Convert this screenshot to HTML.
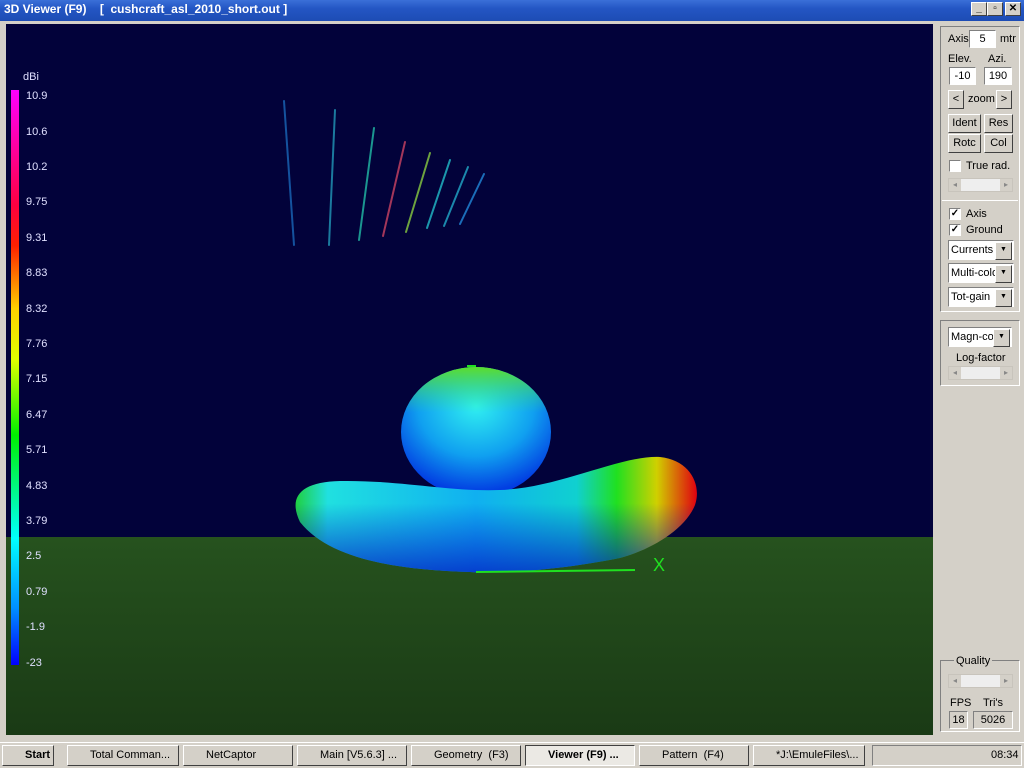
<!DOCTYPE html>
<html><head><style>
*{margin:0;padding:0;box-sizing:border-box}
body{width:1024px;height:768px;overflow:hidden;background:#d4d0c8;font-family:"Liberation Sans",sans-serif;font-size:11px;position:relative}
.a{position:absolute}
.title{left:0;top:0;width:1024px;height:21px;background:linear-gradient(#3a6fd8,#2456c4 40%,#1d4cb4);color:#fff;font-weight:bold;font-size:12px;line-height:19px;padding-left:4px}
.tb{top:2px;width:16px;height:14px;background:#d4d0c8;border:1px solid;border-color:#fff #404040 #404040 #fff;font-size:10px;font-weight:bold;text-align:center;line-height:12px;color:#000}
.vp{left:6px;top:24px;width:927px;height:711px;background:#02023a;overflow:hidden}
.lab{color:#e0e0ff;font-size:11px;left:20px}
.btn{background:#d4d0c8;border:1px solid;border-color:#fff #404040 #404040 #fff;text-align:center;font-size:11px;line-height:17px;height:19px}
.inp{background:#fff;border:1px solid;border-color:#808080 #fff #fff #808080;text-align:center;font-size:11px;line-height:16px;height:18px}
.dd{background:#fff;border:1px solid;border-color:#808080 #fff #fff #808080;height:20px;font-size:11px;line-height:18px;padding-left:2px;width:66px}
.dd:after{content:"▼";position:absolute;right:1px;top:1px;width:15px;height:16px;background:#d4d0c8;border:1px solid;border-color:#fff #404040 #404040 #fff;font-size:7px;text-align:center;line-height:14px}
.cb{width:12px;height:12px;background:#fff;border:1px solid;border-color:#808080 #fff #fff #808080;font-size:10px;line-height:10px;text-align:center;font-weight:bold}
.sb{height:14px;background:#eee;border:1px solid #c8c4bc}
.sb:before{content:"◂";position:absolute;left:0;top:0;width:12px;height:12px;background:#d4d0c8;font-size:8px;line-height:12px;text-align:center;color:#888}
.sb:after{content:"▸";position:absolute;right:0;top:0;width:12px;height:12px;background:#d4d0c8;font-size:8px;line-height:12px;text-align:center;color:#888}
.task{left:0;top:742px;width:1024px;height:26px;background:#d4d0c8;border-top:1px solid #fff}
.tk{top:3px;height:21px;border:1px solid;border-color:#fff #404040 #404040 #fff;font-size:11px;line-height:19px;padding-left:22px;white-space:nowrap;overflow:hidden}
</style></head><body>
<div class="a title">3D Viewer (F9) &nbsp;&nbsp; [ &nbsp;cushcraft_asl_2010_short.out ]</div>
<div class="a tb" style="left:971px">_</div><div class="a tb" style="left:987px">▫</div><div class="a tb" style="left:1005px">✕</div>
<div class="a vp">
<svg width="927" height="711" viewBox="6 24 927 711">
<defs>
<linearGradient id="leg" x1="0" y1="0" x2="0" y2="1">
<stop offset="0" stop-color="#ff00ff"/><stop offset=".2" stop-color="#ff0040"/><stop offset=".27" stop-color="#ff2000"/><stop offset=".38" stop-color="#ffd000"/><stop offset=".47" stop-color="#e0ff00"/><stop offset=".6" stop-color="#00f000"/><stop offset=".78" stop-color="#00ffff"/><stop offset=".9" stop-color="#0090ff"/><stop offset="1" stop-color="#0000ff"/></linearGradient>
<linearGradient id="gr" x1="0" y1="0" x2="0" y2="1"><stop offset="0" stop-color="#26521e"/><stop offset="1" stop-color="#1a3a15"/></linearGradient>
<radialGradient id="ball" cx=".5" cy=".3" r=".7"><stop offset="0" stop-color="#30f0f0"/><stop offset=".55" stop-color="#10a0f0"/><stop offset="1" stop-color="#0030e0"/></radialGradient>
<linearGradient id="ballt" x1="0" y1="0" x2="0" y2="1"><stop offset="0" stop-color="#60e020" stop-opacity=".95"/><stop offset=".35" stop-color="#30e080" stop-opacity="0"/></linearGradient>
<linearGradient id="tor" x1="0" y1="0" x2="1" y2="0"><stop offset="0" stop-color="#20d040"/><stop offset=".08" stop-color="#20e0e0"/><stop offset=".45" stop-color="#10b0f0"/><stop offset=".7" stop-color="#10d0d0"/><stop offset=".8" stop-color="#20e020"/><stop offset=".9" stop-color="#d0d000"/><stop offset="1" stop-color="#e00010"/></linearGradient>
<linearGradient id="torv" x1="0" y1="0" x2="0" y2="1"><stop offset=".4" stop-color="#0000d0" stop-opacity="0"/><stop offset="1" stop-color="#0010c0" stop-opacity=".7"/></linearGradient>
</defs>
<rect x="6" y="537" width="927" height="198" fill="url(#gr)"/>
<rect x="11" y="90" width="8" height="575" fill="url(#leg)"/>
<g stroke-width="2" stroke-linecap="round" opacity=".85">
<line x1="284" y1="101" x2="294" y2="245" stroke="#1860b0"/>
<line x1="335" y1="110" x2="329" y2="245" stroke="#2090b0"/>
<line x1="374" y1="128" x2="359" y2="240" stroke="#20b0a0"/>
<line x1="405" y1="142" x2="383" y2="236" stroke="#c04060"/>
<line x1="430" y1="153" x2="406" y2="232" stroke="#80c040"/>
<line x1="450" y1="160" x2="427" y2="228" stroke="#20b0c0"/>
<line x1="468" y1="167" x2="444" y2="226" stroke="#20a0c0"/>
<line x1="484" y1="174" x2="460" y2="224" stroke="#2080d0"/>
</g>
<ellipse cx="476" cy="432" rx="75" ry="65" fill="url(#ball)"/>
<ellipse cx="476" cy="432" rx="75" ry="65" fill="url(#ballt)"/>
<path id="t" d="M300 522 C288 497 300 482 340 481 C400 480 450 492 500 490 C560 488 620 455 660 457 C690 460 702 485 695 505 C685 530 650 550 620 558 C560 570 500 574 470 572 C400 570 330 560 300 522Z" fill="url(#tor)"/>
<path d="M300 522 C288 497 300 482 340 481 C400 480 450 492 500 490 C560 488 620 455 660 457 C690 460 702 485 695 505 C685 530 650 550 620 558 C560 570 500 574 470 572 C400 570 330 560 300 522Z" fill="url(#torv)"/>
<line x1="476" y1="572" x2="635" y2="570" stroke="#20e020" stroke-width="2"/>
<text x="653" y="571" fill="#20e020" font-size="18" font-family="Liberation Sans">X</text>
<line x1="467" y1="366" x2="476" y2="366" stroke="#20e020" stroke-width="2"/>
</svg>
<div class="a lab" style="left:17px;top:47px">dBi</div>
<div class="a lab" style="top:66px">10.9</div><div class="a lab" style="top:102px">10.6</div><div class="a lab" style="top:137px">10.2</div><div class="a lab" style="top:172px">9.75</div><div class="a lab" style="top:208px">9.31</div><div class="a lab" style="top:243px">8.83</div><div class="a lab" style="top:279px">8.32</div><div class="a lab" style="top:314px">7.76</div><div class="a lab" style="top:349px">7.15</div><div class="a lab" style="top:385px">6.47</div><div class="a lab" style="top:420px">5.71</div><div class="a lab" style="top:456px">4.83</div><div class="a lab" style="top:491px">3.79</div><div class="a lab" style="top:526px">2.5</div><div class="a lab" style="top:562px">0.79</div><div class="a lab" style="top:597px">-1.9</div><div class="a lab" style="top:633px">-23</div>
</div>
<!-- right panel -->
<div class="a" style="left:940px;top:26px;width:80px;height:286px;border:1px solid;border-color:#808080 #fff #fff #808080"></div>
<div class="a" style="left:948px;top:33px">Axis</div><div class="a inp" style="left:969px;top:30px;width:27px">5</div><div class="a" style="left:1000px;top:33px">mtr</div>
<div class="a" style="left:948px;top:53px">Elev.</div><div class="a" style="left:988px;top:53px">Azi.</div>
<div class="a inp" style="left:949px;top:67px;width:27px">-10</div><div class="a inp" style="left:984px;top:67px;width:28px">190</div>
<div class="a btn" style="left:948px;top:90px;width:16px">&lt;</div><div class="a" style="left:968px;top:93px">zoom</div><div class="a btn" style="left:996px;top:90px;width:16px">&gt;</div>
<div class="a btn" style="left:948px;top:114px;width:33px">Ident</div><div class="a btn" style="left:984px;top:114px;width:29px">Res</div>
<div class="a btn" style="left:948px;top:134px;width:33px">Rotc</div><div class="a btn" style="left:984px;top:134px;width:29px">Col</div>
<div class="a cb" style="left:949px;top:160px"></div><div class="a" style="left:966px;top:160px">True rad.</div>
<div class="a sb" style="left:948px;top:178px;width:65px"></div>
<div class="a" style="left:942px;top:200px;width:76px;border-top:1px solid #fff"></div>
<div class="a cb" style="left:949px;top:208px">✓</div><div class="a" style="left:966px;top:208px">Axis</div>
<div class="a cb" style="left:949px;top:224px">✓</div><div class="a" style="left:966px;top:224px">Ground</div>
<div class="a dd" style="left:948px;top:240px">Currents</div>
<div class="a dd" style="left:948px;top:263px">Multi-colo</div>
<div class="a dd" style="left:948px;top:287px">Tot-gain</div>
<div class="a" style="left:940px;top:320px;width:80px;height:66px;border:1px solid;border-color:#808080 #fff #fff #808080"></div>
<div class="a dd" style="left:948px;top:327px;width:64px">Magn-co</div>
<div class="a" style="left:956px;top:352px">Log-factor</div>
<div class="a sb" style="left:948px;top:366px;width:65px"></div>
<div class="a" style="left:940px;top:660px;width:80px;height:72px;border:1px solid;border-color:#808080 #fff #fff #808080"></div>
<div class="a" style="left:954px;top:655px;background:#d4d0c8;padding:0 2px">Quality</div>
<div class="a sb" style="left:948px;top:674px;width:65px"></div>
<div class="a" style="left:950px;top:697px">FPS</div><div class="a" style="left:983px;top:697px">Tri's</div>
<div class="a inp" style="left:949px;top:711px;width:19px;background:#d4d0c8">18</div><div class="a inp" style="left:973px;top:711px;width:40px;background:#d4d0c8">5026</div>
<!-- taskbar -->
<div class="a task"></div>
<div class="a tk" style="left:2px;top:745px;width:52px;font-weight:bold">Start</div>
<div class="a tk" style="left:67px;top:745px;width:112px">Total Comman...</div>
<div class="a tk" style="left:183px;top:745px;width:110px">NetCaptor</div>
<div class="a tk" style="left:297px;top:745px;width:110px">Main [V5.6.3] ...</div>
<div class="a tk" style="left:411px;top:745px;width:110px">Geometry &nbsp;(F3)</div>
<div class="a tk" style="left:525px;top:745px;width:110px;background:#ebe9e4;border-color:#404040 #fff #fff #404040;font-weight:bold">Viewer (F9) ...</div>
<div class="a tk" style="left:639px;top:745px;width:110px">Pattern &nbsp;(F4)</div>
<div class="a tk" style="left:753px;top:745px;width:112px">*J:\EmuleFiles\...</div>
<div class="a tk" style="left:872px;top:745px;width:150px;border-color:#808080 #fff #fff #808080;padding-left:118px">08:34</div>
</body></html>
